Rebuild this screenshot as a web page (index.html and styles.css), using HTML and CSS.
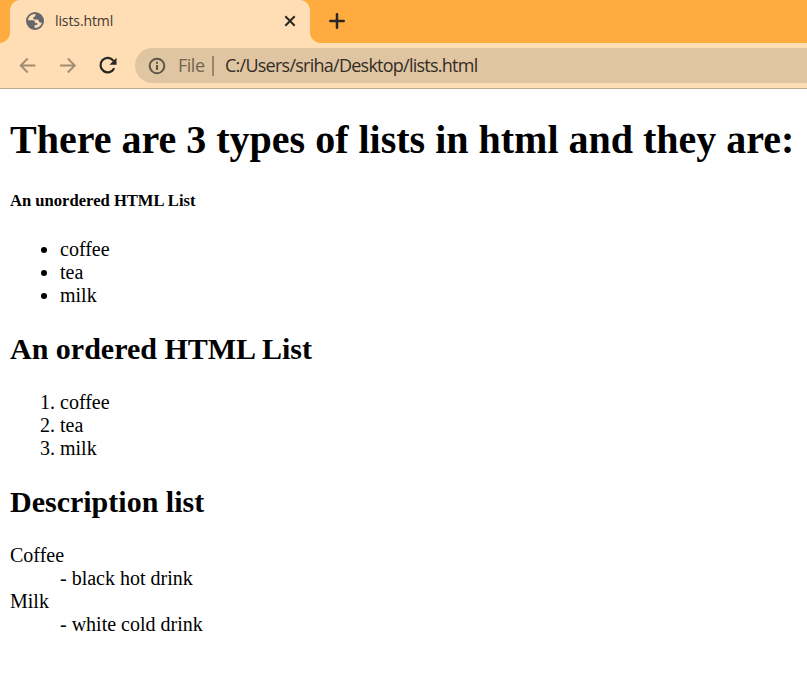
FILE: index.html
```html
<!DOCTYPE html>
<html lang="en">
<head>
<meta charset="utf-8">
<title>lists.html</title>
<link rel="stylesheet" href="styles.css">
</head>
<body>
<header class="browser">
  <div class="tabstrip">
    <div class="tab">
      <svg class="globe" width="18" height="18" viewBox="0 0 18 18"><circle cx="9" cy="9" r="9" fill="#66666a"/><path d="M9.800 2.100C5.400 1.600 2.300 4.800 2 8.300h4.600c1.900 0 2.500 1.100 2.400 2.700h2.200v2H8.600v2.900c3.800.4 6.700-2.200 7.300-5.400-1 .3-2.100.1-2.600-.5-.6-.8-.2-1.600-1.100-2.100-1.500-.8-4.200.4-4.900-1.200-.5-1.700.900-1.900 1.600-2.300.6-.4.400-1.500.900-2.300z" fill="#ffdeb5"/></svg>
      <span class="tab-title">lists.html</span>
      <svg class="close" width="12" height="12" viewBox="0 0 12 12"><path d="M1.300 1.300l9.400 9.400M10.700 1.300l-9.400 9.400" stroke="#292722" stroke-width="2"/></svg>
    </div>
    <svg class="plus" width="16" height="16" viewBox="0 0 16 16"><path d="M8 1.300v13.400M1.300 8h13.400" stroke="#292722" stroke-width="2.500" stroke-linecap="round"/></svg>
  </div>
  <nav class="toolbar">
    <svg class="back" width="18" height="18" viewBox="0 0 18 18"><path d="M16.500 8.500H2M8.700 1.500l-7 7 7 7" class="arrow"/></svg>
    <svg class="forward" width="18" height="18" viewBox="0 0 18 18"><path d="M1 8.500h14.500M8.800 1.500l7 7-7 7" class="arrow"/></svg>
    <svg class="reload" width="20" height="20" viewBox="0 0 20 20"><path d="M15.500 4.800A7.200 7.200 0 1 0 16.200 12.300" fill="none" stroke="#292722" stroke-width="2.200"/><path d="M18.500 1.800v7h-7z" fill="#292722"/></svg>
    <div class="address">
      <svg class="info" width="18" height="18" viewBox="0 0 18 18"><circle cx="9" cy="9" r="7.300" fill="none" stroke="#5d554a" stroke-width="2"/><path d="M9 8v5M9 4.700v2" stroke="#5d554a" stroke-width="2"/></svg>
      <span class="scheme">File</span>
      <span class="divider"></span>
      <span class="url">C:/Users/sriha/Desktop/lists.html</span>
    </div>
  </nav>
</header>
<main class="page">
  <h1>There are 3 types of lists in html and they are:</h1>
  <h5>An unordered HTML List</h5>
  <ul><li>coffee</li><li>tea</li><li>milk</li></ul>
  <h2>An ordered HTML List</h2>
  <ol><li>coffee</li><li>tea</li><li>milk</li></ol>
  <h2>Description list</h2>
  <dl><dt>Coffee</dt><dd>- black hot drink</dd><dt>Milk</dt><dd>- white cold drink</dd></dl>
</main>
</body>
</html>
```
FILE: styles.css
```css
* { box-sizing: border-box; }
body { margin: 0; height: 696px; overflow: hidden; background: #fff; color: #000; font-family: "Liberation Serif", serif; font-size: 20px; line-height: 23px; }
svg { display: block; flex: none; }
.browser { height: 89px; background: #ffdeb5; border-bottom: 1px solid #bfa88b; font-family: "Open Sans", sans-serif; }
.tabstrip { display: flex; height: 43px; background: #ffab40; }
.tab { position: relative; display: flex; align-items: center; width: 300px; height: 43px; margin-left: 10px; padding: 0 14px 1px 16px; border-radius: 10px 10px 0 0; background: #ffdeb5; }
.tab::before, .tab::after { content: ""; position: absolute; bottom: 0; width: 10px; height: 10px; }
.tab::before { left: -10px; background: radial-gradient(circle at 0 0, transparent 9.5px, #ffdeb5 10px); }
.tab::after { right: -10px; background: radial-gradient(circle at 100% 0, transparent 9.5px, #ffdeb5 10px); }
.tab-title { margin: -1px 0 0 11px; font-size: 14px; color: #3f3930; letter-spacing: -.1px; line-height: 20px; }
.close { margin-left: auto; }
.plus { margin: 13px 0 0 19px; }
.toolbar { display: flex; align-items: center; height: 45px; padding-left: 19px; }
.arrow { fill: none; stroke: #a28c72; stroke-width: 1.9; }
.forward { margin-left: 22px; }
.reload { margin-left: 21px; }
.address { display: flex; align-items: center; flex: 1; height: 35px; margin-left: 17px; padding-left: 13px; border-radius: 18px 0 0 18px; background: #dfc5a1; font-size: 18px; }
.scheme { margin-left: 12px; width: 34px; color: #716551; letter-spacing: -.5px; }
.divider { width: 2px; height: 20px; background: #9b866c; }
.url { margin-left: 11px; color: #332d25; letter-spacing: -.75px; white-space: nowrap; }
.page { display: flow-root; padding: 0 10px; }
h1, h2, h5 { font-weight: bold; }
h1 { margin: 28px 0; font-size: 40px; line-height: 46px; white-space: nowrap; }
h5 { margin: 28px 0; font-size: 16.6px; line-height: 19px; }
h2 { margin: 24px 0 25px; font-size: 30px; line-height: 35px; }
ul, ol, dl { margin: 20px 0; }
ul, ol { padding-left: 50px; }
dd { margin-left: 50px; }
```
